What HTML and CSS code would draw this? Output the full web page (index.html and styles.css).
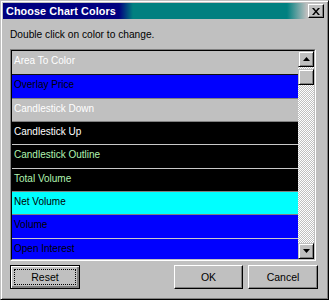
FILE: index.html
```html
<!DOCTYPE html>
<html lang="en">
<head>
    <meta charset="UTF-8">
    <title>Choose Chart Colors</title>
    <link rel="stylesheet" href="styles.css">
</head>
<body>
    <div class="window">
        <div class="titlebar">
            <span class="title">Choose Chart Colors</span>
            <div class="close-button">
                <svg width="8" height="7" viewBox="0 0 8 7">
                    <path d="M0 0h2l2 2.5 2-2.5h2L5 3.5 8 7H6L4 4.5 2 7H0l3-3.5z" fill="#000"/>
                </svg>
            </div>
        </div>

        <div class="content">
            <div class="hint">Double click on color to change.</div>

            <div class="listbox">
                <div class="rows">
                    <div class="row bg-grey txt-white">Area To Color</div>
                    <div class="row bg-blue txt-black line-dark">Overlay Price</div>
                    <div class="row bg-grey txt-white line-mid">Candlestick Down</div>
                    <div class="row bg-black txt-white line-mid">Candlestick Up</div>
                    <div class="row bg-black txt-green line-light">Candlestick Outline</div>
                    <div class="row bg-black txt-green line-light">Total Volume</div>
                    <div class="row bg-cyan txt-black line-mid">Net Volume</div>
                    <div class="row bg-blue txt-black line-mid">Volume</div>
                    <div class="row bg-blue txt-black line-light">Open Interest</div>
                </div>
                <div class="scrollbar">
                    <div class="scroll-btn">
                        <svg width="7" height="4" viewBox="0 0 7 4"><path d="M3.5 0L7 4H0z" fill="#000"/></svg>
                    </div>
                    <div class="track">
                        <div class="thumb"></div>
                    </div>
                    <div class="scroll-btn">
                        <svg width="7" height="4" viewBox="0 0 7 4"><path d="M0 0h7L3.5 4z" fill="#000"/></svg>
                    </div>
                </div>
            </div>

            <div class="buttons">
                <button class="btn btn-default"><span class="focus">Reset</span></button>
                <div class="right-buttons">
                    <button class="btn">OK</button>
                    <button class="btn btn-cancel">Cancel</button>
                </div>
            </div>
        </div>
    </div>
</body>
</html>
```

FILE: styles.css
```css
body {
    margin: 0;
    padding: 0;
    background-color: #c0c0c0;
    font-family: "Liberation Sans", Arial, sans-serif;
    font-size: 10px;
    color: #000;
}

.window {
    width: 329px;
    height: 300px;
    box-sizing: border-box;
    border: 1px solid;
    border-color: #c0c0c0 #000 #000 #c0c0c0;
    box-shadow: inset 1px 1px #fff, inset -1px -1px #808080;
    padding: 2px;
    background-color: #c0c0c0;
    display: flex;
    flex-direction: column;
}

.titlebar {
    height: 16px;
    display: flex;
    align-items: center;
    justify-content: space-between;
    padding: 0 2px 0 3px;
    background: linear-gradient(to right, #000080 0, #000080 116px, #008080 130px, #008080 284px, #c0c0c0 304px);
}

.title {
    color: #fff;
    font-weight: bold;
    font-size: 10.8px;
    letter-spacing: 0.1px;
}

.close-button {
    width: 16px;
    height: 14px;
    box-sizing: border-box;
    background-color: #c0c0c0;
    border: 1px solid;
    border-color: #fff #000 #000 #fff;
    box-shadow: inset -1px -1px #808080;
    display: flex;
    align-items: center;
    justify-content: center;
}

.content {
    display: flex;
    flex-direction: column;
    padding: 0 8px 0 7px;
}

.hint {
    margin: 9px 0 8px;
    line-height: 13px;
    font-size: 10.2px;
}

.listbox {
    width: 306px;
    height: 212px;
    box-sizing: border-box;
    border: 1px solid;
    border-color: #808080 #fff #fff #808080;
    display: flex;
    position: relative;
}

.listbox::before {
    content: "";
    position: absolute;
    inset: 0;
    border: 1px solid;
    border-color: #000 #c0c0c0 #c0c0c0 #000;
    pointer-events: none;
    z-index: 2;
}

.rows {
    flex: 1;
    overflow: hidden;
    padding: 1px 0 0 1px;
}

.row {
    line-height: 13px;
    padding: 3px 0 0 2px;
    border-top: 1px solid transparent;
    box-sizing: content-box;
    height: 19.33px;
    white-space: nowrap;
}

.row:first-child {
    border-top: none;
    height: 20.33px;
}

.line-dark { border-top-color: #101010; }
.line-mid { border-top-color: #808080; }
.line-light { border-top-color: #c8c8c8; }

.bg-grey { background-color: #c0c0c0; }
.bg-blue { background-color: #0000ff; }
.bg-black { background-color: #000; }
.bg-cyan { background-color: #00ffff; }

.txt-white { color: #fff; }
.txt-black { color: #000; }
.txt-green { color: #b0f4b0; }

.scrollbar {
    width: 16px;
    padding: 1px 1px 1px 0;
    display: flex;
    flex-direction: column;
}

.scroll-btn {
    width: 16px;
    height: 16px;
    box-sizing: border-box;
    background-color: #c0c0c0;
    border: 1px solid;
    border-color: #c0c0c0 #000 #000 #c0c0c0;
    box-shadow: inset 1px 1px #fff, inset -1px -1px #808080;
    display: flex;
    align-items: center;
    justify-content: center;
}

.track {
    flex: 1;
    padding-top: 2px;
    background: repeating-conic-gradient(#fff 0 25%, #c0c0c0 0 50%) 0 0 / 2px 2px;
}

.thumb {
    width: 16px;
    height: 16px;
    box-sizing: border-box;
    background-color: #c0c0c0;
    border: 1px solid;
    border-color: #c0c0c0 #000 #000 #c0c0c0;
    box-shadow: inset 1px 1px #fff, inset -1px -1px #808080;
}

.buttons {
    margin-top: 4px;
    display: flex;
    justify-content: space-between;
    width: 308px;
}

.right-buttons {
    display: flex;
    gap: 5px;
}

.btn {
    width: 69px;
    height: 24px;
    box-sizing: border-box;
    margin: 0;
    padding: 0;
    font-family: "Liberation Sans", Arial, sans-serif;
    font-size: 10.5px;
    color: #000;
    background-color: #c0c0c0;
    border: 1px solid;
    border-color: #fff #000 #000 #fff;
    box-shadow: inset -1px -1px #808080;
    display: flex;
    align-items: center;
    justify-content: center;
}

.btn-cancel {
    width: 70px;
}

.btn-default {
    width: 70px;
    border: 1px solid #000;
    box-shadow: inset 1px 1px #fff, inset -2px -2px #808080;
    padding: 3px;
}

.focus {
    flex: 1;
    height: 100%;
    box-sizing: border-box;
    border: 1px dotted #000;
    display: flex;
    align-items: center;
    justify-content: center;
}
```
